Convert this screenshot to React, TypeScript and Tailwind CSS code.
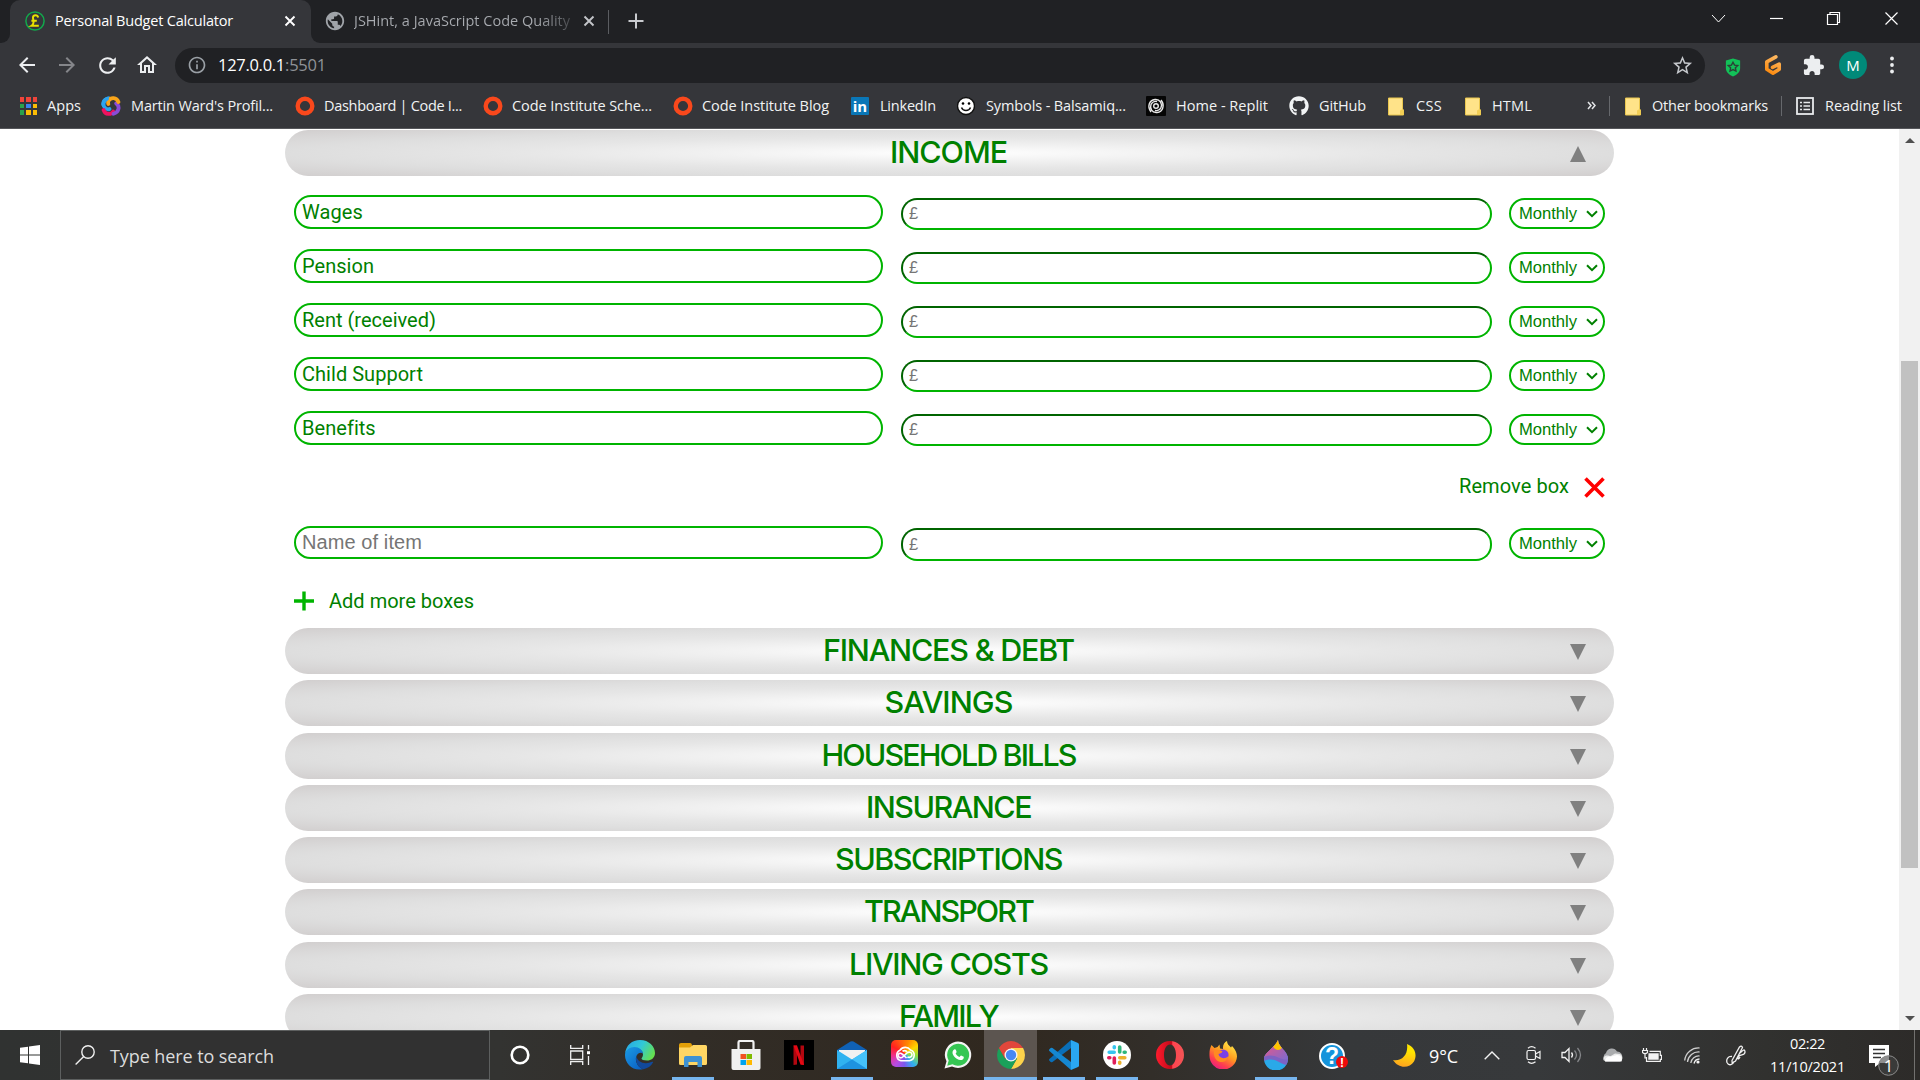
import { useLayoutEffect, useRef, type ReactNode } from "react";
import {
  MdArrowBack,
  MdArrowForward,
  MdExtension,
  MdInfoOutline,
  MdOutlineHome,
  MdPublic,
  MdRefresh,
  MdStarBorder,
} from "react-icons/md";
import { FaGithub, FaWhatsapp } from "react-icons/fa";

/* A single line of text whose letter spacing is tuned so it fills `w` pixels. */
function Fit({ w, className = "", children }: { w: number; className?: string; children: ReactNode }) {
  const ref = useRef<HTMLSpanElement>(null);
  useLayoutEffect(() => {
    const el = ref.current;
    if (!el) return;
    el.style.letterSpacing = "0px";
    const n = (el.textContent ?? "").length;
    const natural = el.getBoundingClientRect().width;
    el.style.letterSpacing = `${(w - natural) / n}px`;
  }, [w]);
  return (
    <span ref={ref} className={"inline-block shrink-0 whitespace-nowrap " + className}>
      {children}
    </span>
  );
}

/* ---------- Browser chrome ---------- */

function CloseX({ className = "" }: { className?: string }) {
  return (
    <svg viewBox="0 0 12 12" className={"size-3 shrink-0 " + className}>
      <path d="M1.5 1.5l9 9M10.5 1.5l-9 9" stroke="currentColor" strokeWidth="1.9" />
    </svg>
  );
}

function TabStrip() {
  return (
    <div className="flex h-[43px] bg-[#202124]">
      <div className="flex h-[43px] w-[10px] items-end bg-[#35363a]">
        <div className="h-full w-full rounded-br-[9px] bg-[#202124]" />
      </div>
      <div className="flex h-[43px] w-[301px] items-center rounded-t-[10px] bg-[#35363a] pb-px pl-[15px] text-white">
        <svg viewBox="0 0 20 20" className="size-5 shrink-0">
          <circle cx="10" cy="10" r="9.1" fill="none" stroke="#12a84c" strokeWidth="1.5" />
          <path
            d="M13.2 6.4C12.8 4.9 11.7 4.2 10.5 4.2 8.8 4.2 7.8 5.4 8 7c.2 1.600.8 3 .5 4.700-.2 1.500-1 2.500-2 3.100h7.300M6.400 9.800h5.400"
            fill="none"
            stroke="#e8e000"
            strokeWidth="2"
          />
        </svg>
        <Fit w={178} className="ml-[10px] text-[14.500px]">Personal Budget Calculator</Fit>
        <CloseX className="ml-[51px]" />
      </div>
      <div className="flex w-[297px] bg-[#35363a]">
        <div className="flex w-full items-center rounded-bl-[9px] bg-[#202124] pb-px pl-[13px]">
          <MdPublic className="size-[22px] shrink-0 text-[#a0a4a9]" />
          <Fit
            w={216}
            className="ml-[8px] bg-linear-to-r from-[#a9acb1] from-85% to-[#4a4c50] bg-clip-text text-[14.500px] leading-5 text-transparent"
          >
            JSHint, a JavaScript Code Quality
          </Fit>
          <CloseX className="ml-[13px] text-[#c3c5c9]" />
        </div>
      </div>
      <div className="mt-[10px] h-6 w-px bg-[#5b5d61]" />
      <svg viewBox="0 0 16 16" className="mt-[13px] ml-[19px] size-4">
        <path d="M8 .5v15M.5 8h15" stroke="#c9cbcf" strokeWidth="2" />
      </svg>
      <div className="ml-auto flex pt-[11px] pr-[21px] text-white">
        <svg viewBox="0 0 15 15" className="mr-[43px] size-[15px]">
          <path d="M1 4l6.500 7L14 4" fill="none" stroke="currentColor" strokeWidth="1" />
        </svg>
        <svg viewBox="0 0 15 15" className="mr-[42px] size-[15px]">
          <path d="M1 7.500h13" stroke="currentColor" strokeWidth="1.200" />
        </svg>
        <svg viewBox="0 0 15 15" className="mr-[43px] size-[15px]">
          <path d="M1.500 3.500h10v10h-10zM4 3.500v-2h9.500v10h-2" fill="none" stroke="currentColor" strokeWidth="1.200" />
        </svg>
        <svg viewBox="0 0 15 15" className="size-[15px]">
          <path d="M1.500 1.500l12 12M13.500 1.500l-12 12" stroke="currentColor" strokeWidth="1.200" />
        </svg>
      </div>
    </div>
  );
}

function Toolbar() {
  return (
    <div className="flex h-[44px] items-center bg-[#35363a] pl-[15px] text-[#eceef0]">
      <MdArrowBack className="size-6" />
      <MdArrowForward className="ml-[16px] size-6 text-[#85868a]" />
      <MdRefresh className="ml-[16px] size-[25px]" />
      <MdOutlineHome className="ml-[15px] size-6" />
      <div className="ml-[16px] flex h-[35px] w-[1530px] items-center rounded-full bg-[#202124] pl-[12px]">
        <MdInfoOutline className="size-5 text-[#9aa0a6]" />
        <Fit w={67} className="ml-[11px] text-[16.500px] text-white">127.0.0.1</Fit>
        <Fit w={41} className="text-[16.500px] text-[#8f9297]">:5501</Fit>
        <MdStarBorder className="mr-[11px] ml-auto size-[23px] text-[#c4c7cb]" />
      </div>
      <svg viewBox="0 0 16 20" className="mt-1 ml-[20px] h-[19px] w-4">
        <path d="M8 .5l7.500 2v8c0 4-3 7-7.500 9-4.500-2-7.500-5-7.500-9v-8z" fill="#12c158" />
        <path d="M8 4.500l1.600 3 3.400.5-2.500 2.300.6 3.400L8 12.100l-3.100 1.600.6-3.400L3 8l3.400-.5z" fill="none" stroke="#2b4237" strokeWidth="1.500" />
      </svg>
      <svg viewBox="0 0 20 22" className="ml-[22px] h-[21px] w-5">
        <defs>
          <linearGradient id="gmark" x1="0.700" x2="0.300" y1="0" y2="1">
            <stop offset="0" stopColor="#fdb65e" />
            <stop offset="1" stopColor="#fb8c12" />
          </linearGradient>
        </defs>
        <path d="M13 2L3.500 7.200v7.800L10 19l6.500-4V9.500L9.500 13" fill="none" stroke="url(#gmark)" strokeWidth="3.800" strokeLinejoin="round" strokeLinecap="round" />
      </svg>
      <MdExtension className="ml-[19px] size-[23px]" />
      <div className="ml-[14px] flex size-7 items-center justify-center rounded-full bg-[#018a79] text-[15px] text-white">M</div>
      <svg viewBox="0 0 4 18" className="ml-[23px] h-[18px] w-1" fill="currentColor">
        <circle cx="2" cy="2.500" r="1.900" />
        <circle cx="2" cy="9" r="1.900" />
        <circle cx="2" cy="15.500" r="1.900" />
      </svg>
    </div>
  );
}

function AppsGrid() {
  const colors = ["#f0443a", "#f0443a", "#f0443a", "#2ba24c", "#3a83f1", "#fbbc05", "#2ba24c", "#fbbc05", "#fbbc05"];
  return (
    <div className="grid w-[17px] shrink-0 grid-cols-3 gap-[2px]">
      {colors.map((c, i) => (
        <i key={i} className="size-[4.400px]" style={{ backgroundColor: c }} />
      ))}
    </div>
  );
}

function Swirl() {
  return (
    <svg viewBox="0 0 20 20" className="size-5 shrink-0" fill="none" strokeWidth="3.800" strokeLinecap="round">
      <path d="M7.500 2.200C2 4 .8 9.500 4.800 12.500 6 13.300 7.500 13.500 8.500 13" stroke="#2aa3ef" />
      <path d="M2.600 14c1.800 5 7.500 5 9.700 1.500" stroke="#ee1260" />
      <path d="M12.500 17.800c5.500-1.800 6.700-7.300 2.700-10.300" stroke="#8a4bd8" />
      <path d="M17.400 6c-1.800-5-7.500-5-9.700-1.500C7 5.700 7 7 7.300 8" stroke="#f9a51a" />
      <path d="M6 2.800C3 4.200 2 6.500 2.300 8.800" stroke="#2aa3ef" />
    </svg>
  );
}

function Ring() {
  return (
    <svg viewBox="0 0 20 20" className="size-5 shrink-0">
      <circle cx="10" cy="10" r="7.300" fill="none" stroke="#f9481c" strokeWidth="4.400" />
    </svg>
  );
}

function Folder() {
  return (
    <svg viewBox="0 0 16 19" className="h-[19px] w-4 shrink-0">
      <path d="M.5 1h14v11l1 1v5H.5z" fill="#ffe389" stroke="#e9c64f" strokeWidth="1" />
      <path d="M12 18v-4.500l2.500-1.500 1 1.500V18z" fill="#f3cf55" />
    </svg>
  );
}

function Bookmark({ icon, gap, w, label, className }: { icon: ReactNode; gap: number; w: number; label: string; className: string }) {
  return (
    <div className={"flex items-center " + className}>
      {icon}
      <span style={{ width: gap }} />
      <Fit w={w}>{label}</Fit>
    </div>
  );
}

function BookmarksBar() {
  return (
    <div className="flex h-[42px] items-center border-b border-[#55565a] bg-[#35363a] pb-[3px] pl-[20px] text-[14.500px] text-[#f1f3f4]">
      <Bookmark icon={<AppsGrid />} gap={10} w={34} label="Apps" className="" />
      <Bookmark icon={<Swirl />} gap={10} w={142} label="Martin Ward's Profil..." className="ml-[20px]" />
      <Bookmark icon={<Ring />} gap={9} w={138} label="Dashboard | Code I..." className="ml-[22px]" />
      <Bookmark icon={<Ring />} gap={9} w={140} label="Code Institute Sche..." className="ml-[21px]" />
      <Bookmark icon={<Ring />} gap={9} w={127} label="Code Institute Blog" className="ml-[21px]" />
      <Bookmark
        icon={<span className="flex size-[18px] items-center justify-center rounded-[1px] bg-[#0a77b7] text-[15px] leading-none font-bold text-white">in</span>}
        gap={11}
        w={56}
        label="LinkedIn"
        className="ml-[22px]"
      />
      <Bookmark
        icon={
          <svg viewBox="0 0 18 20" className="h-5 w-[18px]">
            <circle cx="9" cy="10" r="8.500" fill="#fff" stroke="#111" strokeWidth="1.400" />
            <circle cx="6" cy="7.500" r="1.300" />
            <circle cx="12" cy="7.500" r="1.300" />
            <path d="M4.500 11.500c1.500 4 7.500 4 9 0" fill="none" stroke="#111" strokeWidth="1.500" />
          </svg>
        }
        gap={11}
        w={140}
        label="Symbols - Balsamiq..."
        className="ml-[21px]"
      />
      <Bookmark
        icon={
          <svg viewBox="0 0 20 20" className="size-5">
            <rect width="20" height="20" rx="1" fill="#050505" />
            <g fill="none" stroke="#e9e9e9" strokeWidth="1.400">
              <circle cx="10" cy="10" r="2.300" />
              <path d="M5 16C1 11 3 4 9 3.500c5-.5 7.500 4 6 8-1.200 2.800-4 3.500-6 2.800M15 4c4 5 2 12-4 12.500-5 .5-7.500-4-6-8C6.200 5.700 9 5 11 5.700" />
            </g>
          </svg>
        }
        gap={10}
        w={92}
        label="Home - Replit"
        className="ml-[20px]"
      />
      <Bookmark icon={<FaGithub className="size-5" />} gap={10} w={47} label="GitHub" className="ml-[21px]" />
      <Bookmark icon={<Folder />} gap={12} w={26} label="CSS" className="ml-[22px]" />
      <Bookmark icon={<Folder />} gap={11} w={40} label="HTML" className="ml-[23px]" />
      <svg viewBox="0 0 9 10" className="ml-[55px] h-[10px] w-[9px]">
        <path d="M1 1l3 3.500L1 8M5 1l3 3.500L5 8" fill="none" stroke="#e4e6e8" strokeWidth="1.500" />
      </svg>
      <div className="ml-[13px] h-5 w-px bg-[#66686c]" />
      <Bookmark icon={<Folder />} gap={11} w={116} label="Other bookmarks" className="ml-[15px]" />
      <div className="ml-[13px] h-5 w-px bg-[#66686c]" />
      <Bookmark
        icon={
          <svg viewBox="0 0 18 18" className="size-[18px]" stroke="#e8eaed" fill="none">
            <rect x="1" y="1" width="16" height="16" strokeWidth="1.800" />
            <path d="M4 5.500h2M4 9h2M4 12.500h2M7.500 5.500H14M7.500 9H14M7.500 12.500H14" strokeWidth="1.600" />
          </svg>
        }
        gap={11}
        w={77}
        label="Reading list"
        className="ml-[14px]"
      />
    </div>
  );
}

/* ---------- Budget page ---------- */

function SectionBar({ title, w, open = false, className = "" }: { title: string; w: number; open?: boolean; className?: string }) {
  return (
    <div
      className={
        "relative flex h-[46px] shrink-0 items-center justify-center rounded-full bg-[radial-gradient(ellipse_at_center,#ffffff_0%,#f1f1f1_25%,#e6e6e6_47%,#dedede_70%,#d1cece_100%)] pr-[2px] pb-px " +
        className
      }
    >
      <Fit w={w} className="font-[Inter] text-[30.500px] leading-none font-medium text-[#008000]">{title}</Fit>
      <svg viewBox="0 0 16 16" className="absolute top-4 right-[28px] size-4">
        <path d={open ? "M0 16L8 0l8 16z" : "M0 0h16L8 16z"} fill="#808080" />
      </svg>
    </div>
  );
}

function AmountBox({ className }: { className: string }) {
  return (
    <div
      className={
        "ml-[18px] w-[591px] rounded-[16px] border-2 border-t-[#006400] border-r-[#00b400] border-b-[#00b400] border-l-[#006400] pl-[6px] font-['Liberation_Sans'] text-[16.500px] text-[#757575] " +
        className
      }
    >
      £
    </div>
  );
}

function PeriodSelect() {
  return (
    <div className="ml-[17px] flex h-[31px] w-[96px] items-center rounded-[16px] border-2 border-[#00b400] pl-[8px] font-['Liberation_Sans'] text-[16.600px] text-[#008000]">
      <Fit w={58} className="pt-[2px]">Monthly</Fit>
      <svg viewBox="0 0 12 8" className="ml-[9px] h-2 w-3">
        <path d="M1 1.200l5 5 5-5" fill="none" stroke="#008000" strokeWidth="2" />
      </svg>
    </div>
  );
}

function ItemRow({ label, w }: { label: string; w: number }) {
  return (
    <div className="flex h-[35px] shrink-0 items-start">
      <div className="flex h-[34px] w-[589px] items-center rounded-[17px] border-2 border-[#00b400] pl-[6px] text-[20px] leading-none text-[#008000]">
        <Fit w={w}>{label}</Fit>
      </div>
      <div className="flex pt-[3px]">
        <AmountBox className="h-[32px] leading-[27px]" />
        <PeriodSelect />
      </div>
    </div>
  );
}

function BudgetPage() {
  return (
    <div className="flex h-[901px] shrink-0 overflow-hidden bg-white">
      <main className="ml-[285px] flex w-[1329px] flex-col pt-px font-[Roboto]">
        <SectionBar title="INCOME" w={117} open />
        <div className="mt-[19px] flex shrink-0 flex-col gap-[19px] pl-[9px]">
          <ItemRow label="Wages" w={61} />
          <ItemRow label="Pension" w={72} />
          <ItemRow label="Rent (received)" w={134} />
          <ItemRow label="Child Support" w={121} />
          <ItemRow label="Benefits" w={73} />
        </div>
        <div className="mt-[28px] flex h-[24px] shrink-0 items-center justify-end pr-[9px] text-[20px] leading-none text-[#008000]">
          <Fit w={110}>Remove box</Fit>
          <svg viewBox="0 0 21 21" className="mt-[3px] ml-[15px] size-[21px]">
            <path d="M1.500 1.500l18 18M19.500 1.500l-18 18" stroke="#ff0000" strokeWidth="3.600" />
          </svg>
        </div>
        <div className="mt-[28px] flex h-[35px] shrink-0 items-start pl-[9px]">
          <div className="flex h-[33px] w-[589px] items-center rounded-[17px] border-2 border-[#00b400] pb-[2px] pl-[6px] font-['Liberation_Sans'] text-[20px] leading-none text-[#757575]">
            <Fit w={120}>Name of item</Fit>
          </div>
          <div className="flex pt-[2px]">
            <AmountBox className="h-[33px] leading-[28px]" />
            <PeriodSelect />
          </div>
        </div>
        <div className="mt-[28px] flex h-[24px] shrink-0 items-center pl-[9px] text-[20px] leading-none text-[#008000]">
          <svg viewBox="0 0 20 20" className="size-5">
            <path d="M10 .5v19M0 10h20" stroke="#00b400" strokeWidth="3.400" />
          </svg>
          <Fit w={145} className="ml-[15px]">Add more boxes</Fit>
        </div>
        <SectionBar title="FINANCES & DEBT" w={251} className="mt-[15px]" />
        <SectionBar title="SAVINGS" w={128} className="mt-[6px]" />
        <SectionBar title="HOUSEHOLD BILLS" w={254} className="mt-[7px]" />
        <SectionBar title="INSURANCE" w={165} className="mt-[6px]" />
        <SectionBar title="SUBSCRIPTIONS" w={227} className="mt-[6px]" />
        <SectionBar title="TRANSPORT" w={169} className="mt-[6px]" />
        <SectionBar title="LIVING COSTS" w={199} className="mt-[7px]" />
        <SectionBar title="FAMILY" w={99} className="mt-[6px]" />
      </main>
      <aside className="ml-auto flex w-[21px] flex-col items-center bg-[#f1f1f1]">
        <svg viewBox="0 0 10 5" className="mt-[9px] h-[5px] w-[10px]">
          <path d="M0 5l5-5 5 5z" fill="#505050" />
        </svg>
        <div className="mt-[218px] h-[507px] w-[17px] bg-[#c1c1c1]" />
        <svg viewBox="0 0 10 5" className="mt-auto mb-[9px] h-[5px] w-[10px]">
          <path d="M0 0l5 5 5-5z" fill="#505050" />
        </svg>
      </aside>
    </div>
  );
}

/* ---------- Taskbar ---------- */

function TaskButton({ children, running = false, active = false }: { children: ReactNode; running?: boolean; active?: boolean }) {
  return (
    <div className={"flex h-[50px] w-[53px] shrink-0 flex-col items-center " + (active ? "bg-[#5c5550]" : "")}>
      <div className="flex h-[47px] items-center pt-[3px]">{children}</div>
      <div className={"h-[3px] " + (active ? "w-full " : "w-[42px] ") + (running || active ? "bg-[#76b5ee]" : "")} />
    </div>
  );
}

function EdgeIcon() {
  return (
    <svg viewBox="0 0 30 30" className="size-[30px]">
      <defs>
        <linearGradient id="edgeTop" x1="0" x2="1" y1="0.200" y2="0.600">
          <stop offset="0" stopColor="#27a8e6" />
          <stop offset="0.500" stopColor="#31c8d8" />
          <stop offset="1" stopColor="#66e04e" />
        </linearGradient>
        <linearGradient id="edgeLow" x1="0" x2="0.800" y1="0" y2="1">
          <stop offset="0" stopColor="#1a9be6" />
          <stop offset="1" stopColor="#0b62c4" />
        </linearGradient>
      </defs>
      <path d="M0 14C1 5 7 0 15 0c9 0 15 6.500 15 13 0 5-4 7.500-8 7.500-3.500 0-5.500-1-5.500-2 0-.7 1.500-1.500 1.500-4C18 10 13 8 9 8c-4 0-7.500 2-9 6z" fill="url(#edgeTop)" />
      <path d="M0 15c0-5 5-8 9.500-8 4.500 0 8.300 3 8.500 6.500C16 12 12 13 11 17.500c-.8 5 2.500 10 7 11.700C8 31.500 0 24 0 15z" fill="url(#edgeLow)" />
      <path d="M11.300 16c-1.500 5 1.700 12 7.200 13.200 4-.7 7.500-3.200 9.500-6.700.3-.6-.2-1-.8-.7C20 25 12.500 22.500 11.300 16z" fill="#11499b" />
    </svg>
  );
}

function ExplorerIcon() {
  return (
    <svg viewBox="0 0 28 24" className="h-6 w-7">
      <path d="M0 2q0-2 2-2h9q2 0 2 3v3H0z" fill="#e3a008" />
      <path d="M0 4.500h11L14 2h12.500Q28 2 28 3.500v17q0 1.500-1.500 1.500h-25Q0 22 0 20.500z" fill="#ffd664" />
      <path d="M5 24V15q0-2 2-2h14q2 0 2 2v9h-4.500v-5h-9v5z" fill="#3f92d2" />
    </svg>
  );
}

function StoreIcon() {
  return (
    <svg viewBox="0 0 30 30" className="size-[30px]">
      <path d="M7.500 10V2.500q0-1.500 1.500-1.500h12q1.500 0 1.500 1.500V10" fill="none" stroke="#f2f2f2" strokeWidth="2.200" />
      <path d="M.5 9h29v19q0 2-2 2h-25q-2 0-2-2z" fill="#f0f0f0" />
      <path d="M9.500 14H15v5H9.500z" fill="#f25022" />
      <path d="M15.500 14h5.500v5h-5.500z" fill="#7fba00" />
      <path d="M9.500 20H15v5H9.500z" fill="#00a4ef" />
      <path d="M15.500 20h5.500v5h-5.500z" fill="#ffb900" />
    </svg>
  );
}

function NetflixIcon() {
  return (
    <svg viewBox="0 0 30 30" className="size-[30px]">
      <path d="M0 0h30v30H0z" />
      <path d="M9.500 5.500h3.500v19l-3.500.5zM16.500 5.500H20V25l-3.500-.5z" fill="#b20710" />
      <path d="M9.500 5.500H13L20 25l-3.500-.5z" fill="#e50914" />
    </svg>
  );
}

function MailIcon() {
  return (
    <svg viewBox="0 0 30 28" className="h-7 w-[30px]">
      <path d="M0 9L13.500.6q1.500-.9 3 0L30 9v4H0z" fill="#0f61b5" />
      <path d="M2 9h26v5L15 21 2 14z" fill="#f1f1f1" />
      <path d="M0 9l15 9.500L30 9v19H0z" fill="#30b2f0" />
      <path d="M15 18.500L30 9v19z" fill="#45c2fa" />
      <path d="M0 28l15-9.500L30 28z" fill="#1e93e0" />
    </svg>
  );
}

function CreativeCloudIcon() {
  return (
    <div className="mb-[3px] flex size-[27px] items-center justify-center rounded-[5px] bg-[conic-gradient(from_20deg,#ff8a00,#ffd500,#8ee03c,#2fb0f0,#7b58ee,#b84be0,#f0308a,#ff2020,#ff5a10,#ff8a00)]">
      <svg viewBox="0 0 22 16" className="h-4 w-[22px]" fill="none" stroke="#fff" strokeWidth="1.600">
        <path d="M7 14.700a5.600 5.600 0 0 1-1-10.500A6.500 6.500 0 0 1 16.500 3.900a5.600 5.600 0 0 1-1 10.800z" />
        <path d="M12.500 12L8.500 8.300C6 6 3.500 8 4.200 10c.7 2 3.200 2.200 4.500 1L13 7c2-1.700 4.700-.8 5 1.500.2 2.300-2.500 3.800-4.500 2.300M8.500 5.200q2.500-1.500 4.500.5" />
      </svg>
    </div>
  );
}

function WhatsAppIcon() {
  return (
    <div className="relative flex size-7 items-center justify-center">
      <svg viewBox="0 0 28 28" className="size-7">
        <path d="M.5 27.500l2-7.300A13.200 13.200 0 1 1 8 25.500z" fill="#f4f4f4" />
        <path d="M3.200 24.800l1.500-5.300A11 11 0 1 1 8.500 23.300z" fill="#35c653" />
      </svg>
      <svg viewBox="0 0 14 14" className="absolute top-[7px] left-[7px] size-[14px]">
        <path d="M3.200 1.500C4.500.8 4.800 1.500 5.500 3.500c.4 1-.8 1.500-.8 2 .6 1.500 2 2.800 3.600 3.400.6 0 1.200-1.500 1.800-1.400 2.500 1.100 2.800 1.200 2.700 2-.3 2-2 2.700-3.500 2.500C5 11.500 1.800 7.500 1.500 5c-.1-1.600.7-2.900 1.700-3.500z" fill="#fff" />
      </svg>
    </div>
  );
}

function ChromeIcon() {
  return (
    <svg viewBox="0 0 28 28" className="size-7">
      <path d="M14 14V7h12.100A14 14 0 0 1 14 28l6-10.500z" fill="#fdd34b" />
      <path d="M14 14l-6 3.500L1.900 7A14 14 0 0 0 14 28l6-10.500z" fill="#1aa05a" />
      <path d="M1.900 7A14 14 0 0 1 26.100 7H14v7L8 17.500z" fill="#e1473b" />
      <circle cx="14" cy="14" r="6.500" fill="#f5f5f5" />
      <circle cx="14" cy="14" r="5.200" fill="#4688f4" />
    </svg>
  );
}

function VsCodeIcon() {
  return (
    <svg viewBox="0 0 30 30" className="size-[30px]">
      <path d="M22 0v8L3.500 22q-1 .7-1.800 0L.4 20.700q-.8-.9 0-1.700z" fill="#0a6fb8" />
      <path d="M22 30v-8L3.500 8q-1-.7-1.800 0L.4 9.300q-.8.9 0 1.700z" fill="#1588d2" />
      <path d="M22 0l7 3q1 .5 1 1.500v21q0 1-1 1.500l-7 3z" fill="#2aa7f2" />
    </svg>
  );
}

function SlackIcon() {
  return (
    <svg viewBox="0 0 28 28" className="size-7">
      <circle cx="14" cy="14" r="14" fill="#fff" />
      <g strokeWidth="3.600" strokeLinecap="round">
        <path d="M6.200 11.300h5M11.300 5.800v1" stroke="#36c5f0" />
        <path d="M16.700 6v5M22.200 11.300h-1" stroke="#2eb67d" />
        <path d="M21.800 16.700h-5M16.700 22.200v-1" stroke="#ecb22e" />
        <path d="M11.300 22v-5M5.800 16.700h1" stroke="#e01e5a" />
      </g>
    </svg>
  );
}

function OperaIcon() {
  return (
    <svg viewBox="0 0 28 28" className="size-7">
      <defs>
        <linearGradient id="opera" x1="0" x2="1">
          <stop offset="0" stopColor="#ff1b2d" />
          <stop offset="0.550" stopColor="#c20a1a" />
          <stop offset="0.600" stopColor="#ff4450" />
          <stop offset="1" stopColor="#f25555" />
        </linearGradient>
      </defs>
      <path fillRule="evenodd" d="M14 0a14 14 0 1 0 0 28 14 14 0 1 0 0-28zM14 3.500c3.500 0 6 4.500 6 10.500s-2.500 10.500-6 10.500S8 20 8 14 10.500 3.500 14 3.500z" fill="url(#opera)" />
    </svg>
  );
}

function FirefoxIcon() {
  return (
    <svg viewBox="0 0 28 28" className="size-7">
      <defs>
        <linearGradient id="fox" x1="0.800" x2="0.200" y1="0" y2="1">
          <stop offset="0" stopColor="#fff04a" />
          <stop offset="0.450" stopColor="#ff9a1f" />
          <stop offset="0.750" stopColor="#ff3d50" />
          <stop offset="1" stopColor="#e2188a" />
        </linearGradient>
      </defs>
      <path d="M2.500 4l3 3 3-1 2-2.500.5 4L14 8c-.5-4 1.500-7 4-8 0 3 2 4.500 4 6.500l1-1.500c4 4 5 8 5 10.500A13.500 13.500 0 0 1 .5 14C.3 10 1 7 2.500 4z" fill="url(#fox)" />
      <circle cx="14" cy="14" r="5.600" fill="#7a3fe8" />
      <path d="M5 10c3-1.500 6-1 8.500.5-1 2-3 2-4 2.500.5 4 6 6 10 2-1 6-8 8-12 4-2-2-3-5-2.500-9z" fill="#ff8a22" />
    </svg>
  );
}

function DropIcon() {
  return (
    <svg viewBox="0 0 24 30" className="h-[30px] w-6">
      <defs>
        <clipPath id="drop">
          <path d="M14 0c0 7 10 11 10 19a12 11.500 0 0 1-24 0C0 12 11 8 14 0z" />
        </clipPath>
        <linearGradient id="band" x1="0" x2="1" y1="0" y2="1">
          <stop offset="0" stopColor="#f2557f" />
          <stop offset="1" stopColor="#7d6ad0" />
        </linearGradient>
      </defs>
      <g clipPath="url(#drop)">
        <path d="M0 0h24v30H0z" fill="#2aa9e8" />
        <path d="M0 0h24v25C17 26 12 16 0 21z" fill="#7d62c4" />
        <path d="M0 0h24v19C16 22 12 12 0 17z" fill="url(#band)" />
        <path d="M6 0h12v8q-4 4-8 0z" fill="#ffc400" />
      </g>
    </svg>
  );
}

function HelpIcon() {
  return (
    <svg viewBox="0 0 29 27" className="h-[27px] w-[29px] translate-x-[5px] translate-y-px font-['Liberation_Sans'] font-bold">
      <circle cx="13" cy="13" r="12" fill="#1594dc" stroke="#fff" strokeWidth="2" />
      <text x="13" y="21" textAnchor="middle" fontSize="23" fill="#fff">?</text>
      <circle cx="23" cy="19" r="6" fill="#f00a0a" />
      <text x="23" y="23.500" textAnchor="middle" fontSize="12" fill="#fff">!</text>
    </svg>
  );
}

function TrayIcons() {
  return (
    <div className="flex items-center text-[#f2f2f2]">
      <svg viewBox="0 0 16 9" className="ml-[26px] h-[9px] w-4">
        <path d="M.7 8.300L8 1l7.300 7.300" fill="none" stroke="currentColor" strokeWidth="1.400" />
      </svg>
      <svg viewBox="0 0 15 20" className="ml-[26px] h-5 w-[15px]" fill="none" stroke="currentColor" strokeWidth="1.200">
        <rect x="1" y="5.500" width="8.500" height="9" rx="1.500" />
        <path d="M9.500 9L14 6.500v7L9.500 11M2 3.200Q5.500 0 9.500 3.200M2 16.800q3.500 3.200 7.500 0" />
      </svg>
      <svg viewBox="0 0 21 18" className="ml-[20px] h-[18px] w-[21px]" fill="none" strokeWidth="1.300">
        <path d="M1 6.500h3L8 2.500v13l-4-4H1z" stroke="currentColor" />
        <path d="M10.500 6.500q2 2.500 0 5" stroke="currentColor" />
        <path d="M13.500 4.500q4 4.500 0 9M16.500 2q6 7 0 14" stroke="#85878a" />
      </svg>
      <svg viewBox="0 0 21 14" className="ml-[20px] h-[14px] w-[21px]">
        <path d="M4 13a4.500 4.500 0 0 1 0-8A6 6 0 0 1 15 3.500 5 5 0 0 1 20 10z" fill="#a9abad" />
        <path d="M4 13.500C1 13 .5 10.500 2 8.800 4 7 7 7.500 8 8.500l5-3 5 .5c3 2 3.500 6 0 7.500z" fill="#fff" opacity=".75" />
        <path d="M3 13.500C3 10 6 8 9 8.500l6-1.500c4 0 6 3 4.500 6.500z" fill="#fff" />
      </svg>
      <svg viewBox="0 0 20 15" className="ml-[19px] h-[15px] w-5">
        <path d="M4.500 9v4.300h13.800v-2h1.200v-4h-1.200V3.300H7.500" fill="none" stroke="currentColor" strokeWidth="1.200" />
        <path d="M6.500 5.200h10.200v6.500H6.200z" fill="currentColor" />
        <path d="M1.500 0v2.500M4.500 0v2.500M.5 2.500h5v2q-2.500 2.500-5 0zM3 6v4h2" stroke="currentColor" fill="none" strokeWidth="1.200" />
      </svg>
      <svg viewBox="0 0 16 17" className="ml-[22px] h-[17px] w-4" fill="none" stroke="currentColor" strokeWidth="1.300">
        <path d="M.7 13.500A14 14 0 0 1 15.500 1M3.500 15A11 11 0 0 1 15.500 5M6.800 16a8 8 0 0 1 8.700-7" stroke="#cfcfcf" />
        <path d="M10 16.500a6 6 0 0 1 5.500-4.500" />
        <circle cx="14" cy="15" r="1.600" fill="currentColor" stroke="none" />
      </svg>
      <svg viewBox="0 0 20 21" className="ml-[26px] h-[21px] w-5" fill="none" stroke="currentColor" strokeWidth="1.300">
        <path d="M6 15.500L13.500 2q2-2 3 .5L9.500 16l-3.300 2zM6 11.500c-4-.5-6 3-5 6 2 4 6 2 7-1M14 12c-2 4-3 1-1-1s6 0 6-4-3-1-5 1" />
      </svg>
    </div>
  );
}

function Taskbar() {
  return (
    <div className="flex h-[50px] shrink-0 items-stretch bg-[linear-gradient(90deg,#303231_0%,#333331_26%,#322d27_36%,#30281f_52%,#322e29_60%,#36383a_70%,#37393b_80%,#31312f_92%,#2d2b29_100%)] text-white">
      <div className="flex w-[60px] items-center justify-center">
        <svg viewBox="0 0 20 20" className="size-5" fill="#fff">
          <path d="M0 2.800l8-1.100v7.800H0zM9 1.500L20 0v9.500H9zM0 10.500h8v7.800l-8-1.100zM9 10.500h11V20L9 18.500z" />
        </svg>
      </div>
      <div className="flex w-[430px] items-center border border-[#5d5f5f] bg-[#313131] pl-[14px] text-[#dcdcdc]">
        <svg viewBox="0 0 20 20" className="size-5" fill="none" stroke="#f0f0f0" strokeWidth="1.400">
          <circle cx="13" cy="7" r="6.200" />
          <path d="M8.700 11.500L.6 19.500" />
        </svg>
        <Fit w={164} className="ml-[15px] pt-[2px] text-[18px]">Type here to search</Fit>
      </div>
      <div className="flex w-[60px] items-center justify-center">
        <svg viewBox="0 0 20 20" className="size-5">
          <circle cx="10" cy="10" r="8.300" fill="none" stroke="#fff" strokeWidth="2.600" />
        </svg>
      </div>
      <div className="flex w-[63px] items-center pl-[20px]">
        <svg viewBox="0 0 20 20" className="size-5" fill="none" stroke="#f0f0f0" strokeWidth="1.300">
          <path d="M.7 0v3.300h12V0M.7 6h12v8.500h-12zM.7 20v-3.300h12V20M18.500 0v4.500M18.500 11v9" />
          <path d="M17 6.200h3v3h-3z" fill="#fff" stroke="none" />
        </svg>
      </div>
      <TaskButton><EdgeIcon /></TaskButton>
      <TaskButton running><ExplorerIcon /></TaskButton>
      <TaskButton><StoreIcon /></TaskButton>
      <TaskButton><NetflixIcon /></TaskButton>
      <TaskButton running><MailIcon /></TaskButton>
      <TaskButton><CreativeCloudIcon /></TaskButton>
      <TaskButton><WhatsAppIcon /></TaskButton>
      <TaskButton active><ChromeIcon /></TaskButton>
      <TaskButton running><VsCodeIcon /></TaskButton>
      <TaskButton running><SlackIcon /></TaskButton>
      <TaskButton><OperaIcon /></TaskButton>
      <TaskButton><FirefoxIcon /></TaskButton>
      <TaskButton running><DropIcon /></TaskButton>
      <TaskButton><HelpIcon /></TaskButton>
      <div className="flex items-center pl-[38px]">
        <svg viewBox="0 0 23 23" className="size-[23px]">
          <defs>
            <linearGradient id="moon" x1="0.700" x2="0.500" y1="0" y2="1">
              <stop offset="0.300" stopColor="#ffe500" />
              <stop offset="1" stopColor="#ffa51f" />
            </linearGradient>
          </defs>
          <path d="M14 0C22 3 24.500 11 21 17.500c-4.500 7-15.500 7.500-21-1.500C9 17.500 15.500 10.500 14 0z" fill="url(#moon)" />
        </svg>
        <Fit w={29} className="ml-[13px] pt-[2px] text-[18px]">9°C</Fit>
      </div>
      <TrayIcons />
      <div className="ml-[24px] flex w-[75px] flex-col items-center justify-center text-[14.500px] leading-[23px]">
        <Fit w={35}>02:22</Fit>
        <Fit w={75}>11/10/2021</Fit>
      </div>
      <svg viewBox="0 0 30 31" className="mt-[15px] ml-[24px] h-[31px] w-[30px]">
        <path d="M0 0h20v18H11l-5 4v-4H0z" fill="#fff" />
        <path d="M4 4.500h12M4 8.500h12M4 12.500h8" stroke="#333" strokeWidth="1.300" />
        <circle cx="19.500" cy="20.500" r="9.800" fill="#3a3a39" stroke="#8c8c8c" strokeWidth="1" />
        <path d="M10 18a9.800 9.800 0 0 1 10-7.200V18z" fill="#8e8e8e" />
        <text x="19.500" y="26.500" textAnchor="middle" fontSize="17" fill="#fff">1</text>
      </svg>
      <div className="mr-[5px] ml-auto w-px bg-[#72716f]" />
    </div>
  );
}

export default function App() {
  return (
    <div className="flex h-[1080px] w-[1920px] flex-col overflow-hidden font-['Open_Sans',sans-serif] leading-none">
      <TabStrip />
      <Toolbar />
      <BookmarksBar />
      <BudgetPage />
      <Taskbar />
    </div>
  );
}
